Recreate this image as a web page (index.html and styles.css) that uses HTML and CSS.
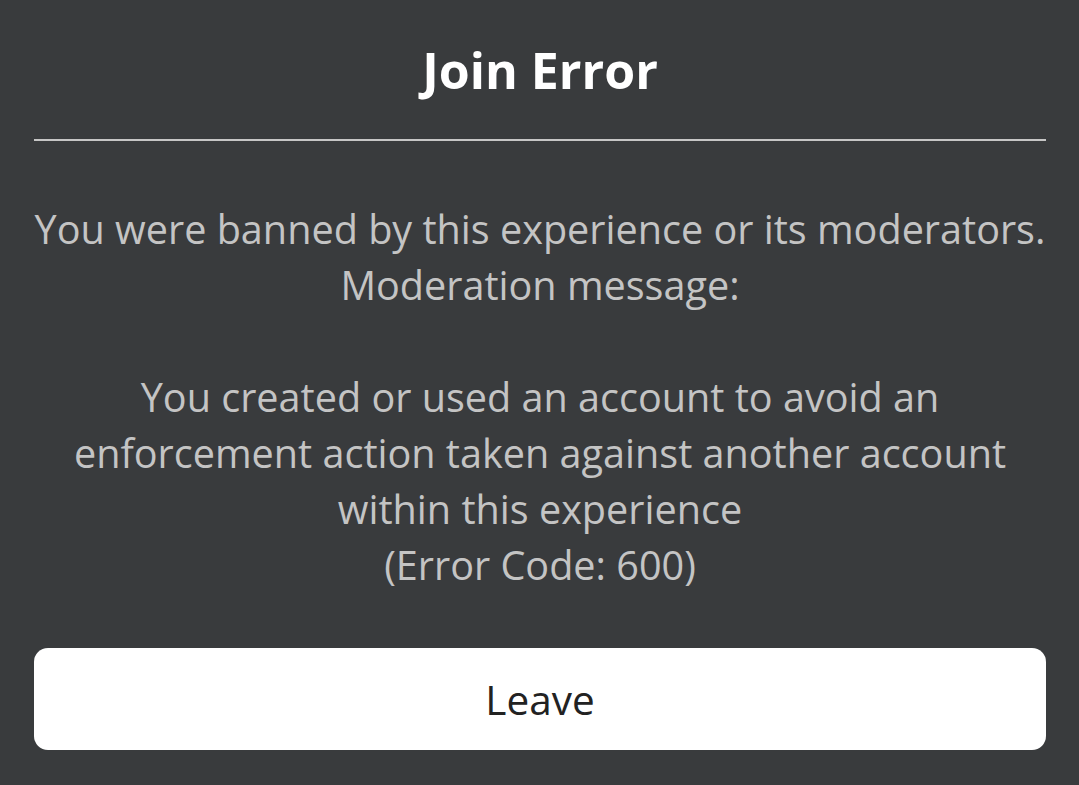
FILE: index.html
```html
<!DOCTYPE html>
<html lang="en">
<head>
<meta charset="utf-8">
<title>Join Error</title>
<link rel="stylesheet" href="styles.css">
</head>
<body>
<main class="dialog">
  <h1 class="title">Join Error</h1>
  <hr class="divider">
  <p class="message">You were banned by this experience or its moderators.<br>Moderation message:<br><br>You created or used an account to avoid an<br>enforcement action taken against another account<br>within this experience<br>(Error Code: 600)</p>
  <button class="leave" type="button">Leave</button>
</main>
</body>
</html>
```
FILE: styles.css
```css
html, body {
  margin: 0;
  padding: 0;
  background: #393b3d;
}
body {
  width: 1079px;
  height: 785px;
  overflow: hidden;
  font-family: "Open Sans", "Noto Sans", sans-serif;
}
.dialog {
  display: flex;
  flex-direction: column;
  padding: 40px 33px 0 34px;
}
.title {
  margin: 0;
  font-size: 50px;
  line-height: 60px;
  font-weight: 700;
  color: #ffffff;
  text-align: center;
}
.divider {
  margin: 39px 0 0 0;
  height: 2px;
  border: 0;
  background: #c6c6c6;
}
.message {
  margin: 60px 0 0 0;
  font-size: 39.6px;
  line-height: 56px;
  color: #c4c4c4;
  text-align: center;
  white-space: nowrap;
}
.leave {
  margin-top: 55px;
  height: 102px;
  border: 0;
  border-radius: 14px;
  background: #ffffff;
  color: #222222;
  font-family: inherit;
  font-size: 40.5px;
  display: flex;
  align-items: center;
  justify-content: center;
  padding: 0;
}
```
